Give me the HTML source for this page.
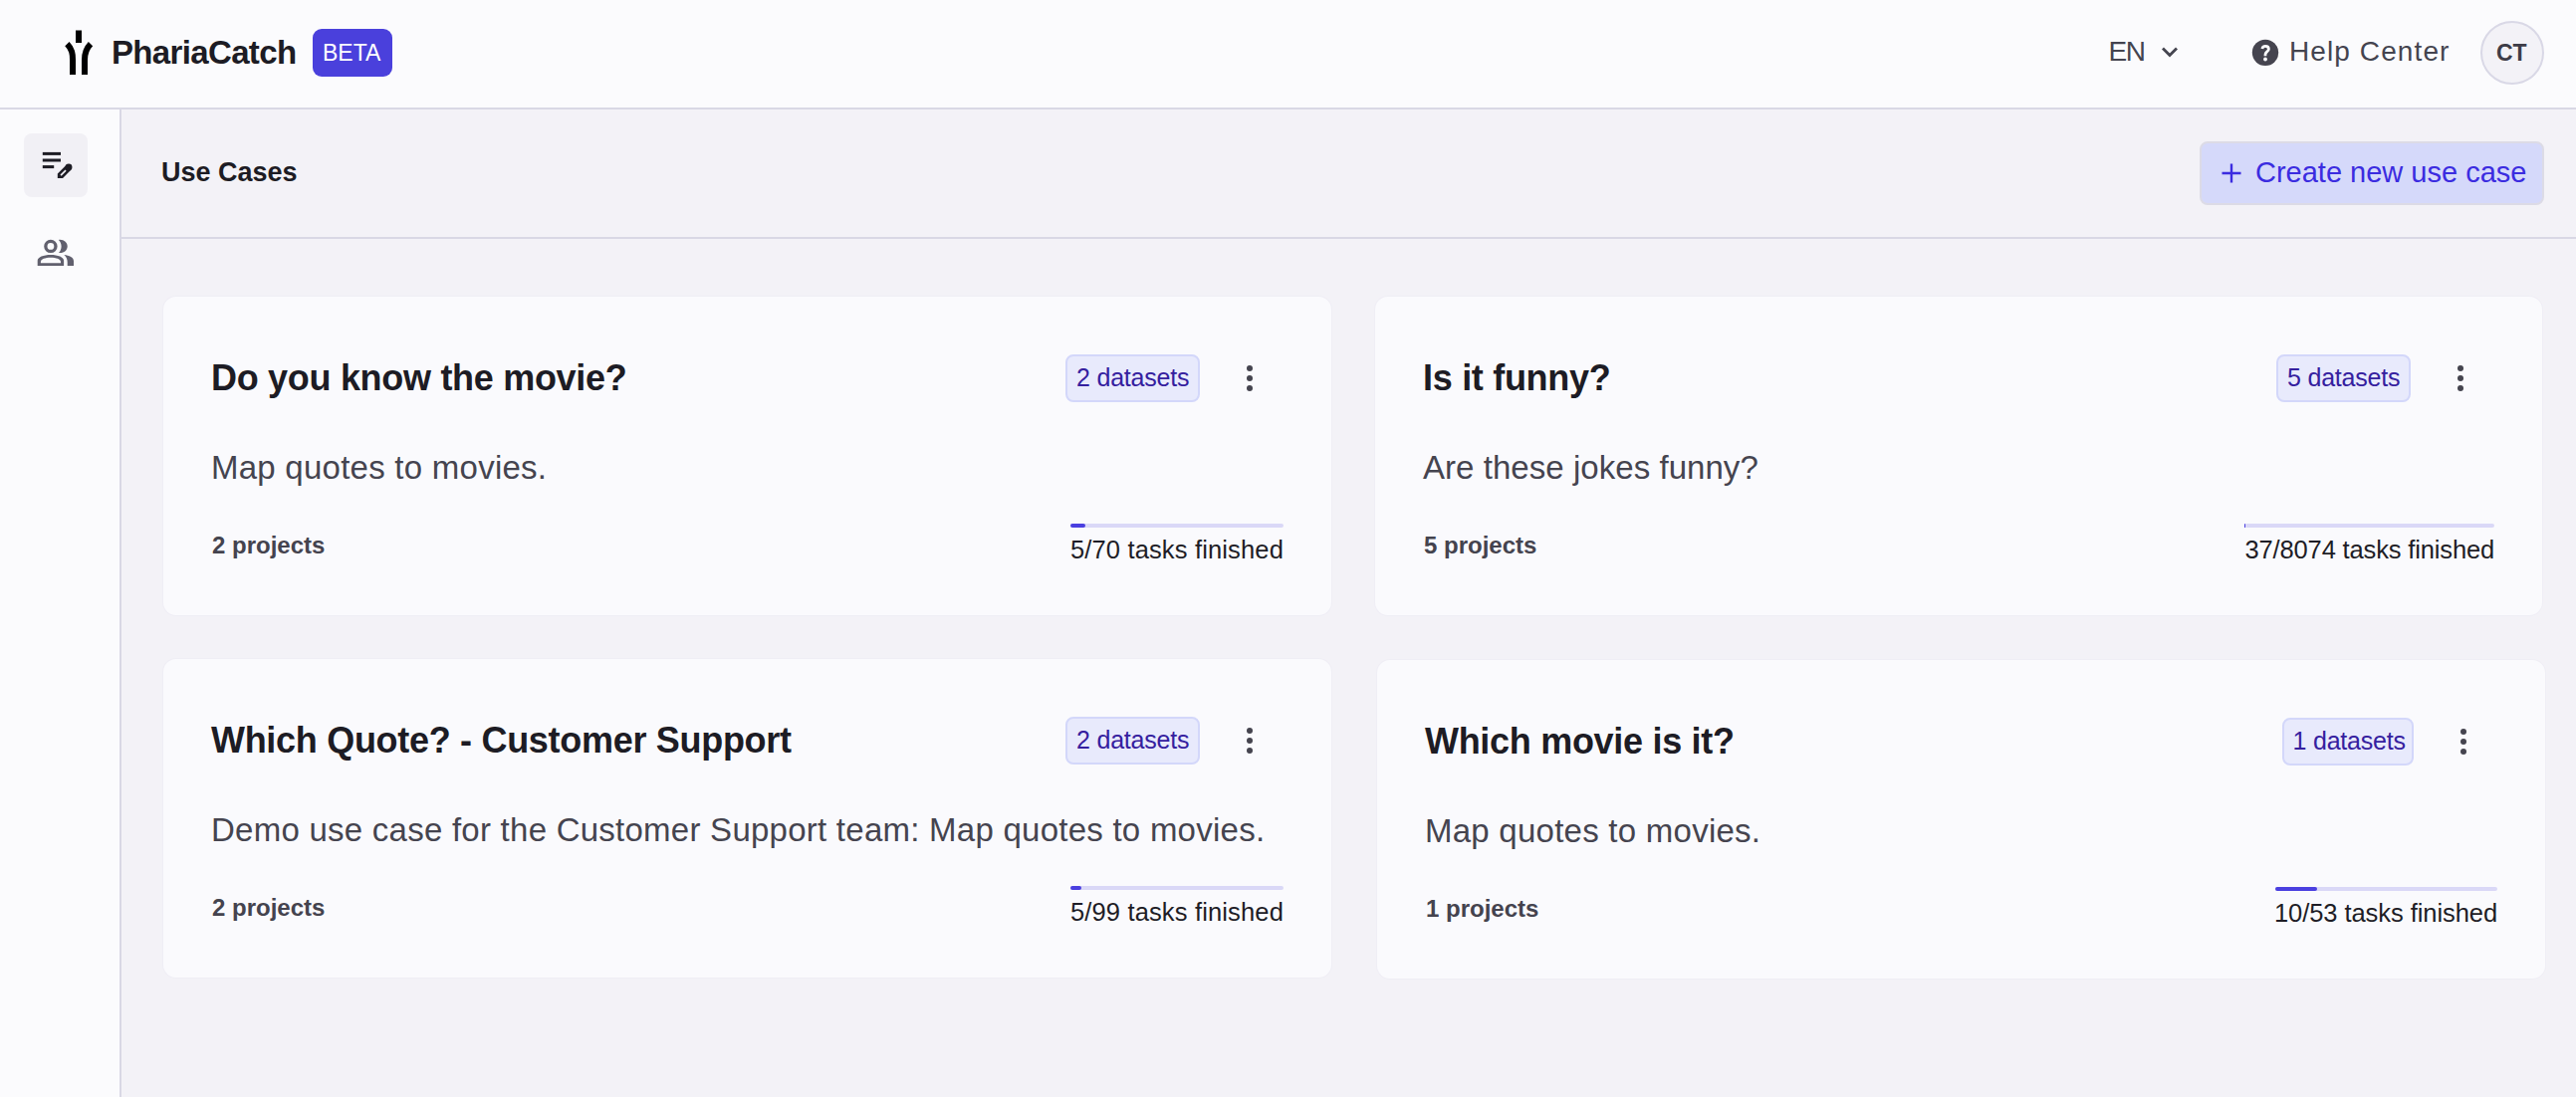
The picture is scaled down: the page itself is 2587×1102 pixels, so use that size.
<!DOCTYPE html>
<html>
<head>
<meta charset="utf-8">
<style>
html, body { margin:0; padding:0; }
body { width:2587px; height:1102px; position:relative; overflow:hidden; background:#f3f2f7; font-family:"Liberation Sans", sans-serif; }
.abs { position:absolute; }
.t { position:absolute; white-space:nowrap; line-height:1; }
#header { left:0; top:0; width:2587px; height:108px; background:#fbfbfd; border-bottom:2px solid #d9d8e5; }
#sidebar { left:0; top:110px; width:120px; height:992px; background:#fbfbfd; border-right:2px solid #d9d8e5; }
#titlebar { left:122px; top:110px; width:2465px; height:128px; border-bottom:2px solid #d9d8e5; }
.card { position:absolute; width:1173px; height:320px; background:#fafafd; border-radius:13px; box-shadow:0 0 0 1px #efeef5; }
.ctitle { font-size:36px; font-weight:700; color:#1d1c24; left:48px; top:64.2px; letter-spacing:-0.3px; }
.cdesc { font-size:33px; color:#45444f; left:48px; top:155.3px; letter-spacing:0.25px; }
.cproj { font-size:24px; font-weight:700; color:#44434e; left:49px; top:237.7px; }
.badge { position:absolute; top:58px; height:44px; border:2px solid #d3d7fa; background:#e8eafc; border-radius:8px; box-sizing:content-box; }
.badge span { position:absolute; left:9px; top:8.9px; letter-spacing:-0.2px; font-size:25px; line-height:1; color:#35209f; white-space:nowrap; }
.kebab { position:absolute; top:68.6px; width:6.8px; height:27px; }
.kebab i { position:absolute; left:0; width:6.8px; height:6.8px; border-radius:50%; background:#45444f; }
.prog { position:absolute; right:48px; top:228px; height:4px; border-radius:2px; background:#dad8f7; }
.prog i { position:absolute; left:0; top:0; height:4px; border-radius:2px; background:#4a3fe0; }
.tasks { position:absolute; right:48px; top:242px; font-size:25.5px; line-height:1; color:#1e1d26; white-space:nowrap; letter-spacing:0.15px; }
</style>
</head>
<body>
<div id="header" class="abs"></div>
<div id="sidebar" class="abs"></div>
<div id="titlebar" class="abs"></div>

<!-- logo -->
<svg class="abs" style="left:60px;top:28px" width="40" height="50" viewBox="60 28 40 50">
  <rect x="76" y="30.5" width="6" height="12.5" fill="#000"/>
  <path d="M67.4 44.2 C72.5 49.5 73 54 73 60 L73 75" stroke="#000" stroke-width="6" fill="none"/>
  <path d="M91 44.2 C85.9 49.5 85 54 85 60 L85 75" stroke="#000" stroke-width="6" fill="none"/>
</svg>
<div class="t" style="left:112px;top:36.2px;font-size:33px;font-weight:700;color:#1d1c24;letter-spacing:-0.65px;">PhariaCatch</div>
<div class="abs" style="left:314px;top:29px;width:80px;height:48px;background:#4a40dc;border-radius:9px;"></div>
<div class="t" style="left:324px;top:41.5px;font-size:23px;color:#fff;">BETA</div>

<!-- header right -->
<div class="t" style="left:2117.5px;top:38.4px;font-size:28px;color:#44444f;letter-spacing:-1.5px;">EN</div>
<svg class="abs" style="left:2168px;top:44px" width="22" height="16" viewBox="0 0 22 16">
  <path d="M4 4.5 L11 11.5 L18 4.5" stroke="#44444f" stroke-width="2.8" fill="none"/>
</svg>
<svg class="abs" style="left:2256px;top:34px" width="38" height="38" viewBox="2256 34 38 38">
  <circle cx="2275" cy="52.85" r="13.2" fill="#45444f"/>
  <path d="M2271.9 48.9 C2272.2 47.1 2273.5 46.3 2275.1 46.3 C2277 46.3 2278.4 47.5 2278.4 49.2 C2278.4 51 2276.3 51.8 2275.5 53.3 C2275.1 54 2274.95 54.8 2274.95 56.2" stroke="#fbfbfd" stroke-width="2.8" fill="none"/>
  <circle cx="2275" cy="59.5" r="1.9" fill="#fbfbfd"/>
</svg>
<div class="t" style="left:2299px;top:38px;font-size:28px;color:#44444f;letter-spacing:1.1px;">Help Center</div>
<div class="abs" style="left:2491px;top:21px;width:60px;height:60px;border:2px solid #d9d8e6;border-radius:50%;background:#f3f2f7;"></div>
<div class="t" style="left:2507px;top:41.7px;font-size:23px;font-weight:700;color:#3d3c47;">CT</div>

<!-- sidebar -->
<div class="abs" style="left:24px;top:134px;width:64px;height:64px;background:#f1f0f5;border-radius:8px;"></div>
<svg class="abs" style="left:36px;top:146px" width="44" height="38" viewBox="36 146 44 38">
  <rect x="42.8" y="152.9" width="18.2" height="3" fill="#1d1c24"/>
  <rect x="42.8" y="159.5" width="18.2" height="3" fill="#1d1c24"/>
  <rect x="42.8" y="166.1" width="11.4" height="3" fill="#1d1c24"/>
  <path d="M57.8 178.9 L63 178.9 L71.43 170.48 L66.58 165.63 L57.8 174.4 Z" fill="#1d1c24"/>
  <circle cx="69.0" cy="168.05" r="3.43" fill="#1d1c24"/>
  <path d="M60.43 175.43 L61.63 176.63 L66.63 171.63 L65.43 170.43 Z" fill="#f1f0f5"/>
</svg>
<svg class="abs" style="left:30px;top:232px" width="52" height="42" viewBox="30 232 52 42">
  <circle cx="50.9" cy="247.4" r="5.05" stroke="#61606e" stroke-width="3.3" fill="none"/>
  <path d="M58.9 240.9 C63.9 240.2 67.7 243.5 67.7 247.45 C67.7 251.4 63.9 254.7 58.9 254 C60.7 252.3 61.6 249.9 61.6 247.45 C61.6 245 60.7 242.6 58.9 240.9 Z" fill="#61606e"/>
  <path fill-rule="evenodd" d="M37.7 266.9 V261.8 C37.7 258.2 43.6 255.9 50.9 255.9 C58.2 255.9 64.1 258.2 64.1 261.8 V266.9 Z M40.9 264.2 H61 V262.9 C61 260.4 56.4 258.8 50.9 258.8 C45.4 258.8 40.9 260.4 40.9 262.9 Z" fill="#61606e"/>
  <path d="M64.3 255.9 C69.6 256.4 74 258.6 74 262.2 V266.9 H67.7 V263.2 C67.7 260.3 66.6 257.7 64.3 255.9 Z" fill="#61606e"/>
</svg>

<!-- title bar -->
<div class="t" style="left:162px;top:160px;font-size:27px;font-weight:700;color:#1d1c24;">Use Cases</div>
<div class="abs" style="left:2209px;top:142px;width:342px;height:60px;border:2px solid #dcdbe6;background:#d5d9fa;border-radius:8px;"></div>
<svg class="abs" style="left:2231px;top:164px" width="20" height="20" viewBox="0 0 20 20">
  <path d="M10 0.5 V19.5 M0.5 10 H19.5" stroke="#3b2ce0" stroke-width="2.4"/>
</svg>
<div class="t" style="left:2265px;top:158.5px;font-size:29px;color:#3b2ce0;">Create new use case</div>

<!-- cards -->
<div class="card" style="left:164px;top:298px;">
  <div class="t ctitle">Do you know the movie?</div>
  <div class="badge" style="right:132px;width:131px;"><span>2 datasets</span></div>
  <div class="kebab" style="right:78.6px;"><i style="top:0"></i><i style="top:10px"></i><i style="top:20px"></i></div>
  <div class="t cdesc">Map quotes to movies.</div>
  <div class="t cproj">2 projects</div>
  <div class="prog" style="width:214px;"><i style="width:15px"></i></div>
  <div class="tasks">5/70 tasks finished</div>
</div>

<div class="card" style="left:1381px;top:298px;width:1172px;">
  <div class="t ctitle">Is it funny?</div>
  <div class="badge" style="right:132px;width:131px;"><span>5 datasets</span></div>
  <div class="kebab" style="right:78.6px;"><i style="top:0"></i><i style="top:10px"></i><i style="top:20px"></i></div>
  <div class="t cdesc" style="letter-spacing:0.05px">Are these jokes funny?</div>
  <div class="t cproj">5 projects</div>
  <div class="prog" style="width:251px;"><i style="width:1px"></i></div>
  <div class="tasks" style="letter-spacing:-0.15px">37/8074 tasks finished</div>
</div>

<div class="card" style="left:164px;top:662px;">
  <div class="t ctitle">Which Quote? - Customer Support</div>
  <div class="badge" style="right:132px;width:131px;"><span>2 datasets</span></div>
  <div class="kebab" style="right:78.6px;"><i style="top:0"></i><i style="top:10px"></i><i style="top:20px"></i></div>
  <div class="t cdesc">Demo use case for the Customer Support team: Map quotes to movies.</div>
  <div class="t cproj">2 projects</div>
  <div class="prog" style="width:214px;"><i style="width:11px"></i></div>
  <div class="tasks">5/99 tasks finished</div>
</div>

<div class="card" style="left:1383px;top:663px;">
  <div class="t ctitle">Which movie is it?</div>
  <div class="badge" style="right:132px;width:128.5px;"><span>1 datasets</span></div>
  <div class="kebab" style="right:78.6px;"><i style="top:0"></i><i style="top:10px"></i><i style="top:20px"></i></div>
  <div class="t cdesc">Map quotes to movies.</div>
  <div class="t cproj">1 projects</div>
  <div class="prog" style="width:223px;"><i style="width:42px"></i></div>
  <div class="tasks" style="letter-spacing:-0.07px">10/53 tasks finished</div>
</div>

</body>
</html>
